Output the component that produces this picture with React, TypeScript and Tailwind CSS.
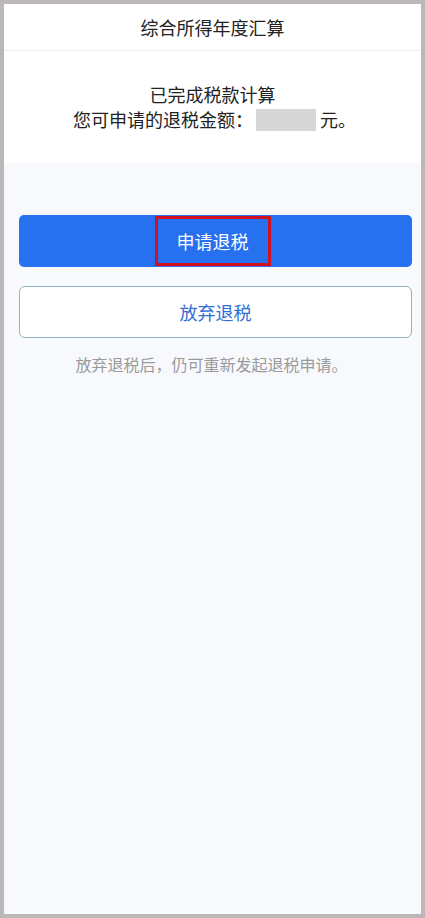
export default function App() {
  const font = { fontFamily: '"Noto Sans CJK SC", "Noto Sans", sans-serif' }

  return (
    <div className="h-[918px] w-full border-4 border-[#bdb8b8] bg-[#f7f9fc] flex flex-col" style={font}>
      <header className="h-[47px] shrink-0 bg-white border-b border-[#eceef0] flex items-center justify-center">
        <h1 className="text-[18px] text-[#222] leading-none">综合所得年度汇算</h1>
      </header>

      <section className="bg-white h-[112px] shrink-0 flex flex-col items-center justify-center text-[18px] text-[#222] leading-[25px]">
        <p>已完成税款计算</p>
        <p className="flex items-center pl-[4px]">
          您可申请的退税金额：
          <span className="inline-block w-[60px] h-[22px] bg-[#d6d6d6] ml-[3px] mr-[4px]" />
          元。
        </p>
      </section>

      <div className="pl-[15px] pr-[9px] pt-[52px] flex flex-col">
        <button className="h-[52px] w-full rounded-[5px] bg-[#2770f0] flex items-center justify-center">
          <span className="h-[50px] w-[116px] mr-[6px] border-[3px] border-[#d2101e] flex items-center justify-center text-[18px] text-white">
            申请退税
          </span>
        </button>

        <button className="mt-[19px] h-[52px] w-full rounded-[6px] bg-white border border-[#8cb6c6] text-[18px] text-[#2f6fd6]">
          放弃退税
        </button>

        <p className="mt-[14px] mr-[8px] text-center text-[16px] text-[#9a9a9a]">
          放弃退税后，仍可重新发起退税申请。
        </p>
      </div>
    </div>
  )
}
